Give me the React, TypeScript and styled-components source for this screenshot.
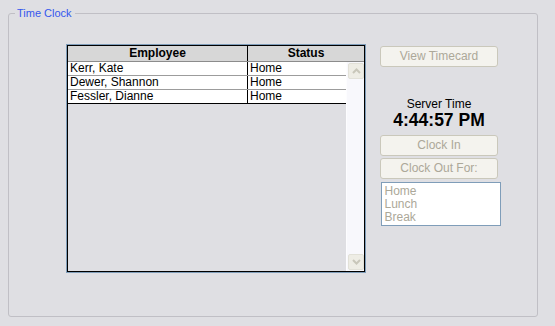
import styled, { createGlobalStyle } from 'styled-components'

const GlobalStyle = createGlobalStyle`
  html, body {
    margin: 0;
    padding: 0;
    background: #dfdfe3;
    font-family: "Liberation Sans", Arial, sans-serif;
    font-size: 11px;
  }
`

const Page = styled.div`
  width: 555px;
  height: 326px;
  padding: 7px 0 0 8px;
  box-sizing: border-box;
`

const Frame = styled.fieldset`
  margin: 0;
  width: 530px;
  height: 310px;
  box-sizing: border-box;
  border: 1px solid #c0bfc5;
  border-radius: 3px;
  padding: 0;
`

const Legend = styled.legend`
  margin-left: 6px;
  padding: 0 3px 0 2px;
  font-size: 11px;
  line-height: 12px;
  color: #3457ee;
`

const Content = styled.div`
  display: flex;
  gap: 15px;
  padding: 26px 0 0 58px;
`

const Grid = styled.div`
  width: 298px;
  height: 227px;
  box-sizing: border-box;
  border: 1px solid #000;
  outline: 1px solid #7f9db9;
  display: flex;
  flex-direction: column;
  background: #dfdfe3;
`

const HeaderRow = styled.div`
  display: grid;
  grid-template-columns: 180px 1fr;
  height: 15px;
  background: #d7d7d7;
  border-bottom: 1px solid #8c8c8c;
`

const HeaderCell = styled.div<{ $divider?: boolean }>`
  font-weight: bold;
  font-size: 12px;
  line-height: 15px;
  text-align: center;
  color: #000;
  border-right: ${({ $divider }) => ($divider ? '1px solid #000' : 'none')};
`

const Body = styled.div`
  flex: 1;
  display: flex;
`

const Rows = styled.div`
  flex: 1;
  display: flex;
  flex-direction: column;
`

const Row = styled.div<{ $last?: boolean }>`
  display: grid;
  grid-template-columns: 180px 1fr;
  height: 14px;
  box-sizing: border-box;
  background: #fff;
  border-bottom: 1px solid ${({ $last }) => ($last ? '#000' : '#9c9c9c')};
`

const Cell = styled.div<{ $divider?: boolean }>`
  font-size: 12px;
  line-height: 13px;
  padding-left: 2px;
  color: #000;
  white-space: nowrap;
  border-right: ${({ $divider }) => ($divider ? '1px solid #000' : 'none')};
`

const ScrollTrack = styled.div`
  width: 18px;
  background: #f8f8fc;
  border-left: 1px solid #fdfdff;
  display: flex;
  flex-direction: column;
  justify-content: space-between;
  padding: 1px 0 1px 1px;
  box-sizing: border-box;
`

const ScrollButton = styled.div`
  width: 16px;
  height: 16px;
  box-sizing: border-box;
  background: #eeede5;
  border: 1px solid #e2e1d8;
  border-radius: 2px;
  display: flex;
  align-items: center;
  justify-content: center;
`

const Side = styled.div`
  width: 118px;
  display: flex;
  flex-direction: column;
  align-items: center;
  padding-top: 1px;
`

const Button = styled.div<{ $mt?: number }>`
  width: 118px;
  height: 21px;
  box-sizing: border-box;
  margin-top: ${({ $mt }) => $mt ?? 0}px;
  background: #f4f3ee;
  border: 1px solid #cac8bb;
  border-radius: 3px;
  color: #aca899;
  font-size: 12px;
  line-height: 19px;
  text-align: center;
`

const ServerLabel = styled.div`
  margin-top: 30px;
  font-size: 12px;
  line-height: 14px;
  color: #000;
`

const ServerTime = styled.div`
  font-size: 17.5px;
  font-weight: bold;
  line-height: 19px;
  color: #000;
  margin-bottom: 5px;
`

const ListBox = styled.div`
  width: 120px;
  height: 44px;
  box-sizing: border-box;
  margin: 3px 0 0 3px;
  background: #fff;
  border: 1px solid #7f9db9;
  padding: 2px 3px;
`

const ListItem = styled.div`
  font-size: 12px;
  line-height: 13px;
  color: #aca899;
`

const Chevron = ({ up }: { up?: boolean }) => (
  <svg width="9" height="6" viewBox="0 0 9 6">
    <path
      d={up ? 'M1 5 L4.5 1.5 L8 5' : 'M1 1 L4.5 4.5 L8 1'}
      fill="none"
      stroke="#c9c7ba"
      strokeWidth="2"
    />
  </svg>
)

const employees = [
  { name: 'Kerr, Kate', status: 'Home' },
  { name: 'Dewer, Shannon', status: 'Home' },
  { name: 'Fessler, Dianne', status: 'Home' },
]

export default function App() {
  return (
    <Page>
      <GlobalStyle />
      <Frame>
        <Legend>Time Clock</Legend>
        <Content>
          <Grid>
            <HeaderRow>
              <HeaderCell $divider>Employee</HeaderCell>
              <HeaderCell>Status</HeaderCell>
            </HeaderRow>
            <Body>
              <Rows>
                {employees.map((e, i) => (
                  <Row key={e.name} $last={i === employees.length - 1}>
                    <Cell $divider>{e.name}</Cell>
                    <Cell>{e.status}</Cell>
                  </Row>
                ))}
              </Rows>
              <ScrollTrack>
                <ScrollButton>
                  <Chevron up />
                </ScrollButton>
                <ScrollButton>
                  <Chevron />
                </ScrollButton>
              </ScrollTrack>
            </Body>
          </Grid>
          <Side>
            <Button>View Timecard</Button>
            <ServerLabel>Server Time</ServerLabel>
            <ServerTime>4:44:57 PM</ServerTime>
            <Button>Clock In</Button>
            <Button $mt={2}>Clock Out For:</Button>
            <ListBox>
              <ListItem>Home</ListItem>
              <ListItem>Lunch</ListItem>
              <ListItem>Break</ListItem>
            </ListBox>
          </Side>
        </Content>
      </Frame>
    </Page>
  )
}
